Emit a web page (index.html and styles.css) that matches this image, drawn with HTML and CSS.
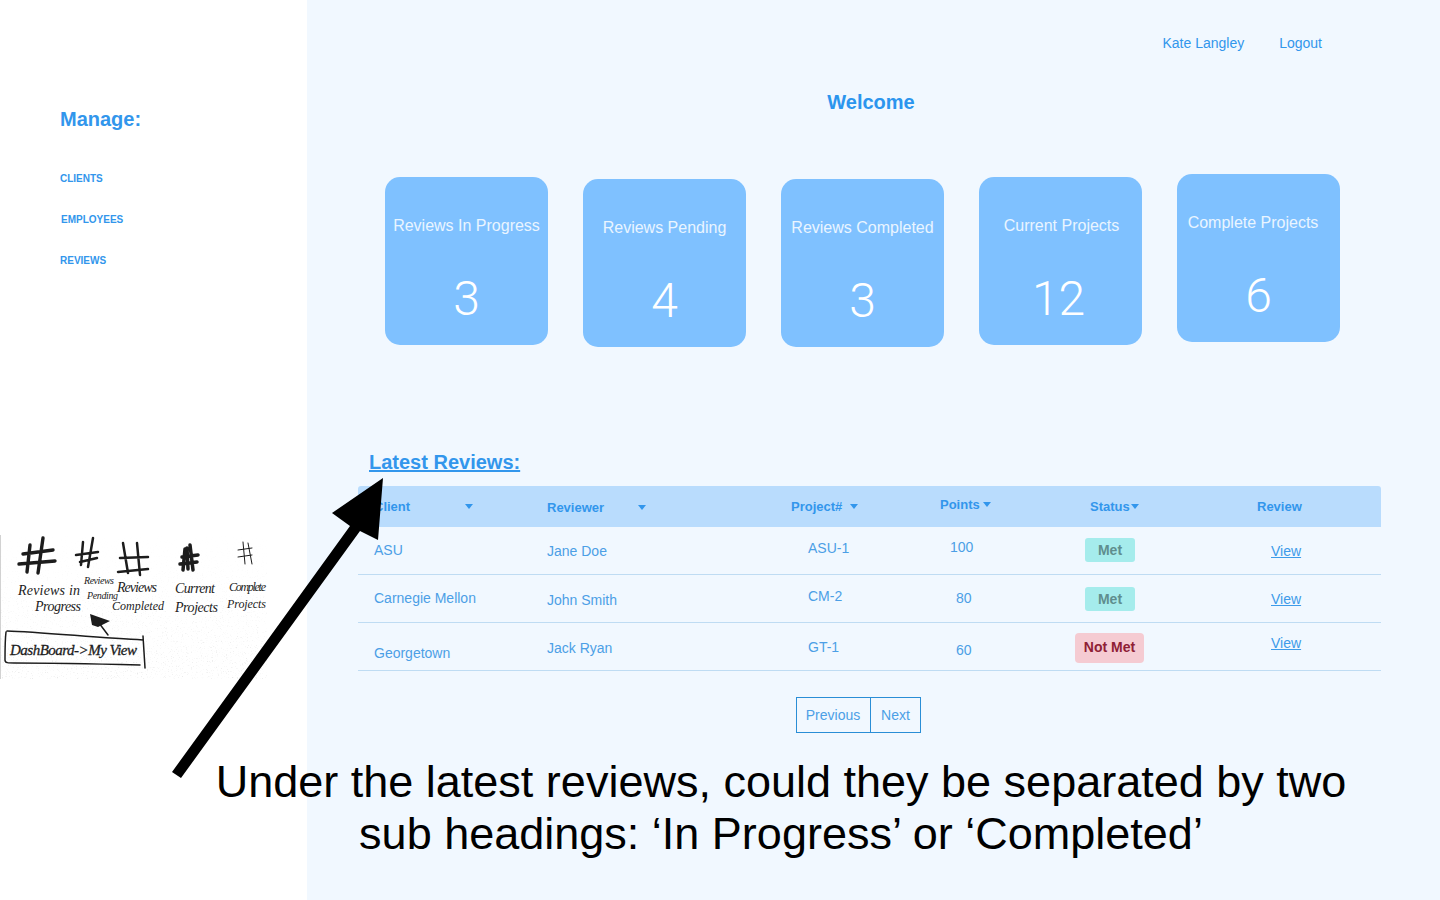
FILE: index.html
```html
<!DOCTYPE html>
<html lang="en">
<head>
<meta charset="utf-8">
<title>Dashboard</title>
<link rel="stylesheet" href="styles.css">
</head>
<body>
<div class="page">
  <aside class="sidebar">
    <h2 class="manage">Manage:</h2>
    <nav class="side-nav">
      <a href="#">CLIENTS</a>
      <a href="#" class="nudge">EMPLOYEES</a>
      <a href="#">REVIEWS</a>
    </nav>
  </aside>
  <main class="main">
    <div class="topbar">
      <a href="#">Kate Langley</a>
      <a href="#">Logout</a>
    </div>
    <h1 class="welcome">Welcome</h1>
    <section class="cards">
      <div class="card m3"><div class="card-title">Reviews In Progress</div><div class="card-num">3</div></div>
      <div class="card m5"><div class="card-title">Reviews Pending</div><div class="card-num">4</div></div>
      <div class="card m5"><div class="card-title">Reviews Completed</div><div class="card-num">3</div></div>
      <div class="card m3"><div class="card-title t-right">Current Projects</div><div class="card-num n-left">12</div></div>
      <div class="card"><div class="card-title t-left">Complete Projects</div><div class="card-num">6</div></div>
    </section>
    <h2 class="latest">Latest Reviews:</h2>
    <section class="table">
      <div class="thead">
        <div class="th o1 w-client">Client <i class="caret"></i></div>
        <div class="th o3 w-reviewer">Reviewer <i class="caret"></i></div>
        <div class="th o1">Project# <i class="caret near"></i></div>
        <div class="th o0">Points <i class="caret tight"></i></div>
        <div class="th o1">Status<i class="caret flush"></i></div>
        <div class="th o1">Review</div>
      </div>
      <div class="row">
        <div class="td o15">ASU</div>
        <div class="td o16">Jane Doe</div>
        <div class="td o13">ASU-1</div>
        <div class="td o12">100</div>
        <div class="td o11"><span class="badge met">Met</span></div>
        <div class="td o16"><a href="#">View</a></div>
      </div>
      <div class="row">
        <div class="td o15">Carnegie Mellon</div>
        <div class="td o17">John Smith</div>
        <div class="td o13">CM-2</div>
        <div class="td o15 p6">80</div>
        <div class="td o12"><span class="badge met">Met</span></div>
        <div class="td o16"><a href="#">View</a></div>
      </div>
      <div class="row">
        <div class="td o22">Georgetown</div>
        <div class="td o17">Jack Ryan</div>
        <div class="td o16">GT-1</div>
        <div class="td o19 p6">60</div>
        <div class="td o10"><span class="badge notmet">Not Met</span></div>
        <div class="td o12"><a href="#">View</a></div>
      </div>
    </section>
    <div class="pager">
      <a href="#">Previous</a>
      <a href="#">Next</a>
    </div>
  </main>

  <svg class="sketch" width="267" height="144" viewBox="0 0 267 144" aria-label="Hand-drawn sketch of the dashboard">
    <defs>
      <filter id="grain" x="0" y="0" width="100%" height="100%">
        <feTurbulence type="fractalNoise" baseFrequency="0.8" numOctaves="2" seed="4"/>
        <feColorMatrix type="matrix" values="0 0 0 0 0.45  0 0 0 0 0.45  0 0 0 0 0.45  0 0 0 4 -2.4"/>
      </filter>
      <linearGradient id="fade" x1="0" y1="0" x2="0" y2="1">
        <stop offset="0" stop-color="#fff" stop-opacity="0"/>
        <stop offset="1" stop-color="#fff" stop-opacity="0.3"/>
      </linearGradient>
      <mask id="fademask"><rect width="267" height="144" fill="url(#fade)"/></mask>
    </defs>
    <rect width="267" height="144" fill="#fff"/>
    <rect x="0" y="0" width="1" height="144" fill="#d2d2d2"/>
    <rect x="0" y="0" width="267" height="144" filter="url(#grain)" mask="url(#fademask)"/>
    <g class="ink s3">
      <path d="M30 10 27 37M43 3 38 38M23 19 53 15M19 29 55 26"/>
    </g>
    <g class="ink s25">
      <path d="M83 7 81 30M93 3 88 32M76 20 98 17M80 27 97 23"/>
      <path d="M123 8 128 38M137 8 140 40M120 23 148 22M118 37 148 34"/>
    </g>
    <g class="ink s35">
      <path d="M185 14 183 35M190 10 193 35M182 22 198 20M180 29 197 27M187 13 188 34"/>
    </g>
    <g class="ink s1">
      <path d="M243 7 245 29M248 8 252 29M238 15 252 13M238 22 252 20"/>
    </g>
    <g class="hand">
      <text x="18" y="60" textLength="62">Reviews in</text>
      <text x="35" y="76" textLength="46">Progress</text>
      <text class="small" x="84" y="49" textLength="30">Reviews</text>
      <text class="small" x="87" y="64" textLength="31">Pending</text>
      <text x="117" y="57" textLength="40">Reviews</text>
      <text class="mid" x="112" y="75" textLength="52">Completed</text>
      <text x="175" y="58" textLength="40">Current</text>
      <text x="175" y="77" textLength="43">Projects</text>
      <text class="mid" x="229" y="56" textLength="37">Complete</text>
      <text class="mid" x="227" y="73" textLength="39">Projects</text>
      <text class="big" x="10" y="120" textLength="127">DashBoard-&gt;My View</text>
    </g>
    <path class="fill-ink" d="M90 79 110 86 98 92 92 90Z"/>
    <path class="ink s15" d="M99 88 108 100"/>
    <path class="ink s15" d="M7 96C40 97 100 103 143 105M143 101 145 133M6 97C5 105 5 118 5 125 5 128 8 128 14 128 60 128 100 129 140 130"/>
  </svg>

  <svg class="arrow" width="1440" height="900" viewBox="0 0 1440 900" aria-hidden="true">
    <polygon points="383,478 332,513 350,526 172,772 181,778 360,531 378,540"/>
  </svg>

  <p class="caption">Under the latest reviews, could they be separated by two<br>sub headings: ‘In Progress’ or ‘Completed’</p>
</div>
</body>
</html>
```
FILE: styles.css
```css
* { box-sizing: border-box; }
html, body { margin: 0; padding: 0; }
body { font-family: "Liberation Sans", Arial, sans-serif; color: #3c98ea; }
a { color: #3296ec; }

.page { position: relative; display: flex; width: 1440px; height: 900px; overflow: hidden; background: #f1f8ff; }

.sidebar { flex: 0 0 307px; background: #fff; padding: 108px 0 0 60px; }
.manage { margin: 0; font-size: 20px; line-height: 23px; font-weight: 700; color: #3296ec; }
.side-nav { display: flex; flex-direction: column; gap: 29px; margin-top: 42px; }
.side-nav a { font-size: 10px; line-height: 12px; font-weight: 700; color: #3296ec; text-decoration: none; }
.side-nav .nudge { margin-left: 1px; }

.main { flex: 1; padding-top: 35px; }
.topbar { display: flex; justify-content: flex-end; gap: 35px; padding-right: 118px; height: 16px; }
.topbar a { font-size: 14px; line-height: 16px; text-decoration: none; }
.welcome { margin: 39px 0 0; padding-right: 5px; text-align: center; font-size: 20px; line-height: 24px; font-weight: 700; color: #2b95ee; }

.cards { display: flex; align-items: flex-start; gap: 35px; margin-top: 60px; padding-left: 78px; height: 174px; }
.card { flex: 0 0 163px; height: 168px; border-radius: 15px; background: #7fc1ff; color: #fff; text-align: center; padding-top: 40px; }
.card.m3 { margin-top: 3px; }
.card.m5 { margin-top: 5px; }
.card-title { font-size: 16px; line-height: 18px; color: #eaf5ff; white-space: nowrap; }
.t-left { margin-right: 11px; }
.t-right { margin-left: 2px; }
.card-num { margin-top: 36px; font-family: Roboto, "Liberation Sans", sans-serif; font-weight: 300; font-size: 48px; line-height: 56px; color: #fff; }
.n-left { margin-right: 4px; }

.latest { margin: 102px 0 0 62px; font-size: 20px; line-height: 24px; font-weight: 700; text-decoration: underline; color: #3296ec; }

.table { width: 1023px; margin: 12px 0 0 51px; }
.thead { display: grid; grid-template-columns: 173px 244px 149px 150px 167px 1fr; height: 41px; padding-left: 16px; background: #b9dcfd; border-radius: 3px 3px 0 0; }
.th { font-size: 13px; line-height: 16px; font-weight: 700; color: #3296ec; white-space: nowrap; }
.th.o0 { padding-top: 11px; }
.th.o1 { padding-top: 13px; }
.th.o3 { padding-top: 14px; }
.caret { display: inline-block; vertical-align: 2px; width: 0; height: 0; border-left: 4px solid transparent; border-right: 4px solid transparent; border-top: 5px solid #3296ec; }
.w-client .caret { margin-left: 51px; }
.w-reviewer .caret { margin-left: 30px; }
.near { margin-left: 4px; }
.tight { margin-left: 0; }
.flush { margin-left: 1px; }

.row { display: grid; grid-template-columns: 173px 261px 142px 125px 196px 1fr; height: 48px; padding-left: 16px; border-bottom: 1px solid #bfdcf3; }
.td { font-size: 14px; line-height: 16px; color: #4c9fe6; white-space: nowrap; }
.td a { color: #3d9be9; }
.o10 { padding-top: 10px; }
.o11 { padding-top: 11px; }
.o12 { padding-top: 12px; }
.o13 { padding-top: 13px; }
.o15 { padding-top: 15px; }
.o16 { padding-top: 16px; }
.o17 { padding-top: 17px; }
.o19 { padding-top: 19px; }
.o22 { padding-top: 22px; }
.p6 { padding-left: 6px; }

.badge { display: inline-block; font-size: 14px; font-weight: 700; border-radius: 3px; text-align: center; }
.met { width: 50px; height: 24px; line-height: 24px; margin-left: 10px; background: #a5ecec; color: #5f8e8e; }
.notmet { width: 69px; height: 30px; line-height: 29px; background: #f5cbd2; color: #8f2035; border-radius: 4px; }

.pager { display: flex; width: 125px; height: 36px; margin: 26px 0 0 489px; border: 1px solid #2a8ed6; }
.pager a { display: flex; align-items: center; justify-content: center; font-size: 14px; color: #4c9fe6; text-decoration: none; }
.pager a:first-child { width: 74px; padding-right: 1px; border-right: 1px solid #2a8ed6; }
.pager a:last-child { flex: 1; }

.sketch { position: absolute; left: 0; top: 535px; }
.ink { fill: none; stroke: #1c1c1c; stroke-linecap: round; stroke-linejoin: round; }
.s1 { stroke-width: 1px; }
.s15 { stroke-width: 1.5px; }
.s25 { stroke-width: 2.5px; }
.s3 { stroke-width: 3.4px; }
.s35 { stroke-width: 3.5px; }
.fill-ink { fill: #1c1c1c; }
.hand text { font-family: "Liberation Serif", serif; font-style: italic; font-size: 14px; fill: #1c1c1c; }
.hand .small { font-size: 10px; }
.hand .mid { font-size: 12px; }
.hand .big { font-size: 15px; stroke: #1c1c1c; stroke-width: 0.3px; }

.arrow { position: absolute; left: 0; top: 0; pointer-events: none; }
.arrow polygon { fill: #000; }

.caption { position: absolute; left: 121px; top: 756px; width: 1320px; margin: 0; text-align: center; font-size: 45px; line-height: 52px; color: #000; }
```
